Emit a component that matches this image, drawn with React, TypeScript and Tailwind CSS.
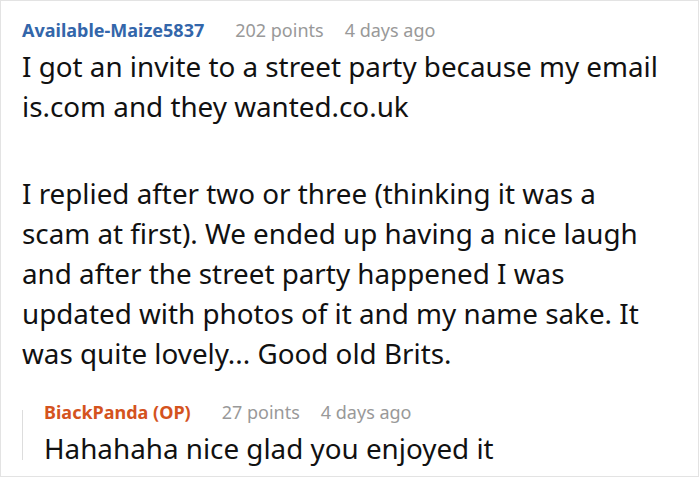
import React from "react";

const para1 = ["I got an invite to a street party because my email", "is.com and they wanted.co.uk"];
const para2 = [
  "I replied after two or three (thinking it was a",
  "scam at first). We ended up having a nice laugh",
  "and after the street party happened I was",
  "updated with photos of it and my name sake. It",
  "was quite lovely... Good old Brits.",
];

export default function App() {
  return (
    <div className="w-[700px] h-[478px] bg-white" style={{ fontFamily: '"Noto Sans", sans-serif' }}>
      <div className="w-[699px] h-[477px] border border-[#e3e3e3] pl-[21px] pt-[13px] overflow-hidden">
        <div className="flex items-baseline text-[18px] leading-[32px]">
          <span className="font-bold text-[#3366aa]">Available-Maize5837</span>
          <span className="ml-[31px] text-[#999999]">202 points</span>
          <span className="ml-[21px] text-[#999999]">4 days ago</span>
        </div>
        <div className="text-[27.8px] leading-[40px] text-[#111111] whitespace-nowrap">
          <p>
            {para1.map((l) => (
              <span key={l} className="block">{l}</span>
            ))}
          </p>
          <p className="mt-[47px]">
            {para2.map((l) => (
              <span key={l} className="block">{l}</span>
            ))}
          </p>
        </div>
        <div className="flex mt-[23px]">
          <div className="w-px bg-[#dddddd] mt-[14px] mb-[8px]" />
          <div className="pl-[21px]">
            <div className="flex items-baseline text-[18px] leading-[32px]">
              <span className="font-bold text-[#d4531e]">BiackPanda (OP)</span>
              <span className="ml-[31px] text-[#999999]">27 points</span>
              <span className="ml-[21px] text-[#999999]">4 days ago</span>
            </div>
            <div className="text-[27.8px] leading-[40px] text-[#111111]">Hahahaha nice glad you enjoyed it</div>
          </div>
        </div>
      </div>
    </div>
  );
}
